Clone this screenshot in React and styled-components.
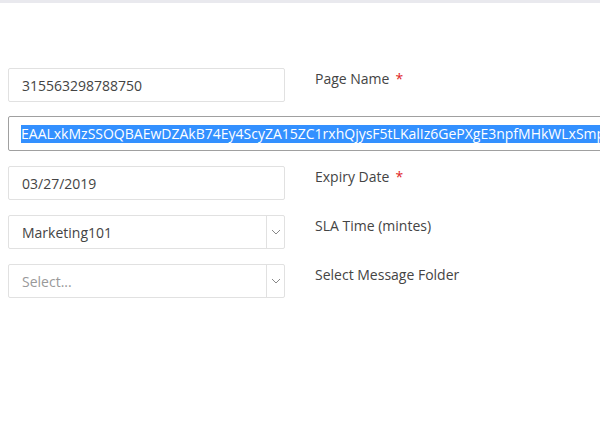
import React from "react";
import styled, { createGlobalStyle } from "styled-components";

const GlobalStyle = createGlobalStyle`
  html, body {
    margin: 0;
    padding: 0;
    background: #fff;
    overflow: hidden;
  }
  body {
    font-family: "Open Sans", "Liberation Sans", sans-serif;
    font-size: 14px;
    color: #444;
  }
`;

const Page = styled.div`
  width: 600px;
  height: 442px;
  overflow: hidden;
  border-top: 3px solid #e9e9ee;
  box-sizing: border-box;
`;

const Form = styled.div`
  display: flex;
  flex-direction: column;
  padding: 65px 0 0 8px;
`;

const Row = styled.div`
  display: grid;
  grid-template-columns: 277px 1fr;
  column-gap: 30px;
  margin-bottom: ${(p) => p.gap || 15}px;
`;

const Field = styled.div`
  box-sizing: border-box;
  height: 34px;
  border: 1px solid #e1e1e1;
  border-radius: 2px;
  display: flex;
  align-items: center;
  background: #fff;
`;

const Value = styled.span`
  flex: 1;
  padding-left: 13px;
  color: ${(p) => (p.placeholder ? "#999" : "#444")};
  white-space: nowrap;
`;

const ArrowBox = styled.div`
  width: 17px;
  height: 100%;
  border-left: 1px solid #e1e1e1;
  display: flex;
  align-items: center;
  justify-content: center;
`;

const Label = styled.div`
  padding-top: 1px;
  line-height: 20px;
  color: #444;
`;

const Req = styled.span`
  color: #e02424;
  margin-left: 6px;
`;

const TokenField = styled.div`
  box-sizing: border-box;
  width: 820px;
  height: 35px;
  border: 1px solid #a0a0a0;
  border-radius: 2px;
  display: flex;
  align-items: center;
  padding-left: 12px;
  white-space: nowrap;
  overflow: hidden;
`;

const Selected = styled.span`
  background: #3390ff;
  color: #fff;
  line-height: 18px;
  font-size: 14px;
`;

const Chevron = () => (
  <svg width="10" height="6" viewBox="0 0 10 6">
    <path d="M1 1l4 4 4-4" fill="none" stroke="#888" strokeWidth="1" />
  </svg>
);

export default function App() {
  return (
    <Page>
      <GlobalStyle />
      <Form>
        <Row gap={14}>
          <Field>
            <Value>315563298788750</Value>
          </Field>
          <Label>
            Page Name<Req>*</Req>
          </Label>
        </Row>
        <Row gap={15}>
          <TokenField>
            <Selected>
              EAALxkMzSSOQBAEwDZAkB74Ey4ScyZA15ZC1rxhQjysF5tLKalIz6GePXgE3npfMHkWLxSmpZBqRrT8wK
            </Selected>
          </TokenField>
        </Row>
        <Row>
          <Field>
            <Value>03/27/2019</Value>
          </Field>
          <Label>
            Expiry Date<Req>*</Req>
          </Label>
        </Row>
        <Row>
          <Field>
            <Value>Marketing101</Value>
            <ArrowBox>
              <Chevron />
            </ArrowBox>
          </Field>
          <Label>SLA Time (mintes)</Label>
        </Row>
        <Row>
          <Field>
            <Value placeholder>Select...</Value>
            <ArrowBox>
              <Chevron />
            </ArrowBox>
          </Field>
          <Label>Select Message Folder</Label>
        </Row>
      </Form>
    </Page>
  );
}
